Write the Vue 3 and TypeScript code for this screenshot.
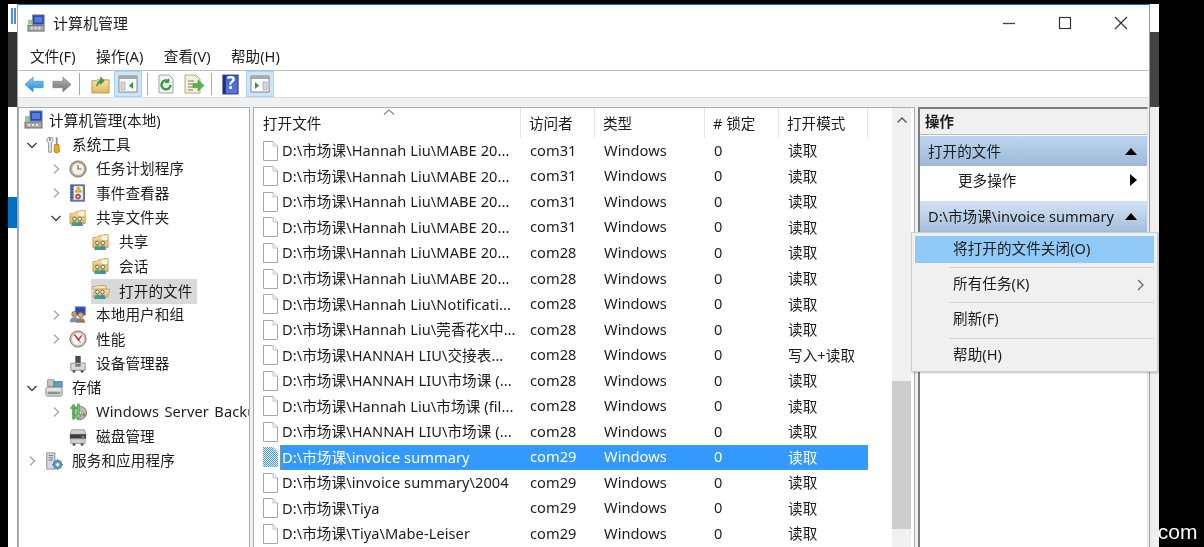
<script setup lang="ts">
interface TreeNode { label: string; level: number; arrow: '' | 'open' | 'closed'; icon: string; selected?: boolean }
interface FileRow { name: string; user: string; mode: string; selected?: boolean }

const menus: string[] = ['文件(F)', '操作(A)', '查看(V)', '帮助(H)']

const tree: TreeNode[] = [
  { label: '计算机管理(本地)', level: 0, arrow: '', icon: 'i-computer' },
  { label: '系统工具', level: 1, arrow: 'open', icon: 'i-tools' },
  { label: '任务计划程序', level: 2, arrow: 'closed', icon: 'i-clock' },
  { label: '事件查看器', level: 2, arrow: 'closed', icon: 'i-log' },
  { label: '共享文件夹', level: 2, arrow: 'open', icon: 'i-share' },
  { label: '共享', level: 3, arrow: '', icon: 'i-share' },
  { label: '会话', level: 3, arrow: '', icon: 'i-share' },
  { label: '打开的文件', level: 3, arrow: '', icon: 'i-share-open', selected: true },
  { label: '本地用户和组', level: 2, arrow: 'closed', icon: 'i-users' },
  { label: '性能', level: 2, arrow: 'closed', icon: 'i-gauge' },
  { label: '设备管理器', level: 2, arrow: '', icon: 'i-device' },
  { label: '存储', level: 1, arrow: 'open', icon: 'i-storage' },
  { label: 'Windows Server Backup', level: 2, arrow: 'closed', icon: 'i-backup' },
  { label: '磁盘管理', level: 2, arrow: '', icon: 'i-disk' },
  { label: '服务和应用程序', level: 1, arrow: 'closed', icon: 'i-services' },
]

const files: FileRow[] = [
  { name: 'D:\\市场课\\Hannah Liu\\MABE 20...', user: 'com31', mode: '读取' },
  { name: 'D:\\市场课\\Hannah Liu\\MABE 20...', user: 'com31', mode: '读取' },
  { name: 'D:\\市场课\\Hannah Liu\\MABE 20...', user: 'com31', mode: '读取' },
  { name: 'D:\\市场课\\Hannah Liu\\MABE 20...', user: 'com31', mode: '读取' },
  { name: 'D:\\市场课\\Hannah Liu\\MABE 20...', user: 'com28', mode: '读取' },
  { name: 'D:\\市场课\\Hannah Liu\\MABE 20...', user: 'com28', mode: '读取' },
  { name: 'D:\\市场课\\Hannah Liu\\Notificati...', user: 'com28', mode: '读取' },
  { name: 'D:\\市场课\\Hannah Liu\\莞香花X中...', user: 'com28', mode: '读取' },
  { name: 'D:\\市场课\\HANNAH LIU\\交接表...', user: 'com28', mode: '写入+读取' },
  { name: 'D:\\市场课\\HANNAH LIU\\市场课 (...', user: 'com28', mode: '读取' },
  { name: 'D:\\市场课\\Hannah Liu\\市场课 (fil...', user: 'com28', mode: '读取' },
  { name: 'D:\\市场课\\HANNAH LIU\\市场课 (...', user: 'com28', mode: '读取' },
  { name: 'D:\\市场课\\invoice summary', user: 'com29', mode: '读取', selected: true },
  { name: 'D:\\市场课\\invoice summary\\2004', user: 'com29', mode: '读取' },
  { name: 'D:\\市场课\\Tiya', user: 'com29', mode: '读取' },
  { name: 'D:\\市场课\\Tiya\\Mabe-Leiser', user: 'com29', mode: '读取' },
]

const menuItems: { label: string; hot?: boolean; sub?: boolean }[] = [
  { label: '将打开的文件关闭(O)', hot: true },
  { label: '所有任务(K)', sub: true },
  { label: '刷新(F)' },
  { label: '帮助(H)' },
]
</script>

<template>
  <div class="desktop">
    <svg class="defs" width="0" height="0" aria-hidden="true">
      <defs>
        <linearGradient id="g-folder" x1="0" y1="0" x2="0" y2="1"><stop offset="0" stop-color="#f7e3a6" /><stop offset="1" stop-color="#dfb862" /></linearGradient>
        <linearGradient id="g-blue" x1="0" y1="0" x2="0" y2="1"><stop offset="0" stop-color="#8fd0f8" /><stop offset="1" stop-color="#1f86d8" /></linearGradient>
        <linearGradient id="g-gray" x1="0" y1="0" x2="0" y2="1"><stop offset="0" stop-color="#b8b8b8" /><stop offset="1" stop-color="#6f6f6f" /></linearGradient>
        <linearGradient id="g-help" x1="0" y1="0" x2="0" y2="1"><stop offset="0" stop-color="#3f63cc" /><stop offset="1" stop-color="#5b7ad8" /></linearGradient>
        <symbol id="i-computer" viewBox="0 0 20 20">
          <rect x="6" y="1" width="12" height="10" fill="#2a47b8" stroke="#6d7c96" />
          <rect x="8" y="3" width="8" height="6" fill="#4f7ee0" />
          <path d="M1 6h5v5H1z" fill="#7fbf6a" opacity=".8" />
          <rect x="1" y="12" width="17" height="6" fill="#a9a9a9" stroke="#6e6e6e" />
          <path d="M4 14h2v2H4zm4 0h2v2H8zm4 0h2v2h-2z" fill="#e8e8e8" />
        </symbol>
        <symbol id="i-tools" viewBox="0 0 20 20">
          <path d="M5 1.500a3 3 0 0 0-2.500 4.500L4 8v10h3V8l1.500-2A3 3 0 0 0 6 1.500V5H5z" fill="#eeeeee" stroke="#777" stroke-width=".9" />
          <rect x="12" y="1.500" width="2" height="8" fill="#8f8f8f" />
          <path d="M10.500 9.500h5l.5 8-3 1.500-3-1.500z" fill="#e8a820" stroke="#8c6410" stroke-width=".7" />
        </symbol>
        <symbol id="i-clock" viewBox="0 0 20 20">
          <circle cx="10" cy="10" r="9" fill="#b3aea3" stroke="#77736a" />
          <circle cx="10" cy="10" r="6.500" fill="#f6f2e2" />
          <path d="M10 5.500V10h4" fill="none" stroke="#7a6a40" stroke-width="1.300" />
        </symbol>
        <symbol id="i-log" viewBox="0 0 20 20">
          <rect x="2" y="1" width="15" height="18" fill="#6c86b4" stroke="#3f5781" />
          <rect x="5" y="2.500" width="10.500" height="15" fill="#eeeef2" />
          <path d="M2 3h3M2 6h3M2 9h3M2 12h3M2 15h3" stroke="#26344f" stroke-width="1" />
          <path d="M10.500 3l3.500 6H7z" fill="#f0c020" stroke="#a07c10" stroke-width=".6" />
          <circle cx="10" cy="14" r="2.800" fill="#e0505a" stroke="#952a30" stroke-width=".7" />
          <circle cx="10" cy="14" r="1" fill="#fff" />
        </symbol>
        <symbol id="i-share" viewBox="0 0 20 20">
          <path d="M1 5h4l1-1h2V3l8-1.500 2 .5v14H1z" fill="url(#g-folder)" stroke="#b89550" stroke-width=".8" />
          <rect x="11" y="3" width="6" height="5" fill="#fbf4dc" />
          <path d="M1 9h17" stroke="#caa45a" stroke-width=".7" />
          <circle cx="6" cy="11" r="2" fill="#fff3d8" stroke="#5b5138" stroke-width=".9" />
          <circle cx="12" cy="11" r="2" fill="#fff3d8" stroke="#5b5138" stroke-width=".9" />
          <path d="M2.500 19c0-3.500 1.500-5 3.500-5s3.500 1.500 3.500 5z" fill="#46a46e" />
          <path d="M8.500 19c0-3.500 1.500-5 3.500-5s3.500 1.500 3.500 5z" fill="#3e8fb0" />
        </symbol>
        <symbol id="i-share-open" viewBox="0 0 20 20">
          <path d="M1 5h4l1-1h9l1 4H1z" fill="#f7e6b0" stroke="#b89550" stroke-width=".8" />
          <path d="M4 8h16l-3 9H1z" fill="url(#g-folder)" stroke="#b89550" stroke-width=".8" />
          <circle cx="6" cy="11" r="2" fill="#fff3d8" stroke="#5b5138" stroke-width=".9" />
          <circle cx="11.500" cy="11" r="2" fill="#fff3d8" stroke="#5b5138" stroke-width=".9" />
          <path d="M2.500 19c0-3.500 1.500-5 3.500-5s3.500 1.500 3.500 5z" fill="#46a46e" />
          <path d="M8 19c0-3.500 1.500-5 3.500-5s3.500 1.500 3.500 5z" fill="#3e8fb0" />
        </symbol>
        <symbol id="i-users" viewBox="0 0 20 20">
          <rect x="7" y="1" width="11" height="9" fill="#2b49b8" stroke="#6d7c96" />
          <circle cx="6" cy="9" r="3" fill="#c49a6c" stroke="#6d5030" stroke-width=".7" />
          <circle cx="13" cy="10" r="3" fill="#d3ad80" stroke="#6d5030" stroke-width=".7" />
          <path d="M1 18c0-4 2-5.500 5-5.500s5 1.500 5 5.500z" fill="#7c8fb0" />
          <path d="M8 18.500c0-3.500 2-5 5-5s5 1.500 5 5z" fill="#9a7c55" />
        </symbol>
        <symbol id="i-gauge" viewBox="0 0 20 20">
          <circle cx="10" cy="10" r="9" fill="#c9c5bb" stroke="#77736a" />
          <circle cx="10" cy="10" r="6.500" fill="#fbfafa" />
          <path d="M6 5l4.500 6L14 6" fill="none" stroke="#cf2a2a" stroke-width="1.600" />
          <path d="M10.500 11l2.500 3" stroke="#444" stroke-width="1" />
        </symbol>
        <symbol id="i-device" viewBox="0 0 20 20">
          <rect x="7" y="1" width="6" height="8" fill="#4a4a4a" />
          <path d="M2 9h16v8H2z" fill="#d9d9d9" stroke="#8a8a8a" />
          <rect x="4" y="17" width="3" height="2.500" fill="#4a4a4a" />
          <rect x="13" y="17" width="3" height="2.500" fill="#4a4a4a" />
          <rect x="7" y="10" width="6" height="3" fill="#7a7a7a" />
        </symbol>
        <symbol id="i-storage" viewBox="0 0 20 20">
          <rect x="3" y="1" width="7" height="7" fill="#c9c9c9" stroke="#8c8c8c" />
          <rect x="10" y="3" width="9" height="6" fill="#5aa3cc" stroke="#3e7c9f" />
          <path d="M1 11c0-1 1-2 2-2h14c1 0 2 1 2 2v6c0 1-1 2-2 2H3c-1 0-2-1-2-2z" fill="#e4e4e4" stroke="#7d7d7d" />
          <rect x="3" y="14" width="14" height="3" fill="#8f8f8f" />
          <rect x="14" y="15" width="2" height="1.500" fill="#6cd06c" />
        </symbol>
        <symbol id="i-backup" viewBox="0 0 20 20">
          <circle cx="12" cy="11" r="7.500" fill="#b9b9b9" stroke="#7d7d7d" />
          <circle cx="12" cy="11" r="2" fill="#efefef" stroke="#777" stroke-width=".7" />
          <path d="M4 18V6H1.500L5 1l3.500 5H6v12z" fill="#4fc24f" stroke="#2c8a2c" stroke-width=".6" />
          <path d="M9.500 1v12H7l3.500 5 3.500-5h-2.500V1z" fill="#6fd96f" stroke="#2c8a2c" stroke-width=".6" />
          <circle cx="17" cy="13" r="1.800" fill="#c9703a" />
        </symbol>
        <symbol id="i-disk" viewBox="0 0 20 20">
          <path d="M3 2h14l2 5H1z" fill="#d2d2d2" stroke="#8a8a8a" stroke-width=".8" />
          <rect x="1" y="7" width="18" height="5" fill="#3c3c3c" />
          <rect x="14" y="9" width="3" height="1.500" fill="#6cd06c" />
          <rect x="2" y="12" width="16" height="5" fill="#cfcfcf" stroke="#8a8a8a" stroke-width=".8" />
          <rect x="4" y="17" width="3" height="2.500" fill="#4a4a4a" />
          <rect x="13" y="17" width="3" height="2.500" fill="#4a4a4a" />
        </symbol>
        <symbol id="i-services" viewBox="0 0 20 20">
          <rect x="2" y="1" width="9" height="18" fill="#d5dbe3" stroke="#7f8a99" />
          <path d="M4 4h5M4 6.500h5M4 9h5" stroke="#6a7482" stroke-width="1" />
          <circle cx="14" cy="14" r="4.500" fill="#6a9cc8" stroke="#3e6f9c" />
          <circle cx="14" cy="14" r="1.800" fill="#eef4fa" />
          <path d="M14 8v2M14 18v2M8 14h2M18 14h2M10 10l1.500 1.500M18 18l-1.500-1.500M18 10l-1.500 1.500M10 18l1.500-1.500" stroke="#4a7cac" stroke-width="1.200" />
        </symbol>
        <symbol id="i-page" viewBox="0 0 15 20">
          <path d="M.5.500H10L14.500 5V19.500H.5z" fill="#fff" stroke="#a6a6a6" />
          <path d="M10 .500V5h4.500" fill="#f0f0f0" stroke="#c4c4c4" />
        </symbol>
        <pattern id="p-dots" width="2" height="2" patternUnits="userSpaceOnUse">
          <rect width="2" height="2" fill="#eaf3fb" /><rect width="1" height="1" fill="#3f97e8" /><rect x="1" y="1" width="1" height="1" fill="#3f97e8" />
        </pattern>
        <symbol id="i-page-sel" viewBox="0 0 15 20">
          <path d="M0 0H10L15 5V20H0z" fill="url(#p-dots)" />
        </symbol>
      </defs>
    </svg>

    <div class="strip strip-left">
      <div class="strip-cap"><i class="cap-mark"></i></div>
      <div class="strip-dark left-dark"></div>
      <div class="strip-white"></div>
      <div class="strip-blue"></div>
      <div class="strip-white grow"></div>
    </div>

    <section class="window">
      <header class="title">
        <svg class="title-icon"><use href="#i-computer" /></svg>
        <span class="title-text">计算机管理</span>
        <div class="caps">
          <svg class="cap" viewBox="0 0 14 14"><path d="M1 7.500h12" stroke="#444" stroke-width="1.300" /></svg>
          <svg class="cap" viewBox="0 0 14 14"><rect x="1.500" y="1.500" width="11" height="11" fill="none" stroke="#333" stroke-width="1.200" /></svg>
          <svg class="cap" viewBox="0 0 14 14"><path d="M1 1l12 12M13 1L1 13" stroke="#333" stroke-width="1.200" /></svg>
        </div>
      </header>

      <nav class="menubar">
        <span v-for="m in menus" :key="m" class="menu-item">{{ m }}</span>
      </nav>

      <div class="toolbar">
        <span class="tb">
          <svg viewBox="0 0 22 18" width="20" height="17"><path d="M1 9l9-8v4.500h11v7H10V17z" fill="url(#g-blue)" stroke="#3e94d8" stroke-width=".8" /></svg>
        </span>
        <span class="tb">
          <svg viewBox="0 0 22 18" width="20" height="17"><path d="M21 9l-9-8v4.500H1v7h11V17z" fill="url(#g-gray)" stroke="#808080" stroke-width=".8" /></svg>
        </span>
        <i class="tb-sep first"></i>
        <span class="tb">
          <svg viewBox="0 0 20 20" width="19" height="19"><path d="M1 6h5l1-1h12v14H1z" fill="url(#g-folder)" stroke="#a88a40" stroke-width=".8" /><path d="M6 12c0-4 2-6 4-7V2l4 4-4 4V8c-1 .5-3 2-4 4z" fill="#3f9c3f" stroke="#2a7a2a" stroke-width=".5" /></svg>
        </span>
        <span class="tb on">
          <svg viewBox="0 0 20 20" width="20" height="20"><rect x="1" y="2" width="18" height="16" fill="#fafafa" stroke="#8a8a8a" /><rect x="1" y="2" width="18" height="3" fill="#a8a8a8" /><path d="M3 8h4v8H3z" fill="#d9d9d9" stroke="#999" stroke-width=".6" /><path d="M15 8v7l-4-3.500z" fill="#2f9b3f" /></svg>
        </span>
        <i class="tb-sep wide"></i>
        <span class="tb">
          <svg viewBox="0 0 20 20" width="20" height="20"><path d="M3 1h10l4 4v14H3z" fill="#f3f3f3" stroke="#a6a6a6" /><path d="M14.500 11a4.500 4.500 0 1 1-1.500-3.500" fill="none" stroke="#2f9b3f" stroke-width="2.400" /><path d="M13 4v5h-4.500z" fill="#2f9b3f" /></svg>
        </span>
        <span class="tb">
          <svg viewBox="0 0 20 20" width="20" height="20"><path d="M1 1h11l4 4v14H1z" fill="#f6efd2" stroke="#b2a98a" /><path d="M4 7h6M4 10h5M4 13h5M4 16h5" stroke="#7a7a7a" stroke-width="1" /><path d="M9 9.500h5V6l6 5.500-6 5.500v-3.500H9z" fill="#58b548" stroke="#3a8a30" stroke-width=".5" /></svg>
        </span>
        <i class="tb-sep third"></i>
        <span class="tb">
          <svg viewBox="0 0 18 22" width="17" height="21"><rect x="1" y="1" width="16" height="20" fill="url(#g-help)" stroke="#1f2f78" /><rect x="1" y="1" width="3" height="20" fill="#1e2f80" /></svg>
          <span class="help-q">?</span>
        </span>
        <span class="tb on second">
          <svg viewBox="0 0 20 20" width="20" height="20"><rect x="1" y="2" width="18" height="16" fill="#fafafa" stroke="#8a8a8a" /><rect x="1" y="2" width="18" height="3" fill="#a8a8a8" /><path d="M13 8h4v8h-4z" fill="#d9d9d9" stroke="#999" stroke-width=".6" /><path d="M5 8v7l4-3.500z" fill="#2f9b3f" /></svg>
        </span>
      </div>

      <div class="panes">
        <aside class="pane tree">
          <div v-for="n in tree" :key="n.label" class="tree-row" :class="'lv' + n.level">
            <svg v-if="n.level === 1 || n.level === 2" class="arrow" viewBox="0 0 12 12">
              <path v-if="n.arrow === 'open'" d="M1.500 4l4.500 4.500L10.500 4" fill="none" stroke="#444" stroke-width="1.500" />
              <path v-else-if="n.arrow === 'closed'" d="M4 1.500L8.500 6 4 10.500" fill="none" stroke="#aaa" stroke-width="1.500" />
            </svg>
            <span class="node" :class="{ picked: n.selected }">
              <svg class="node-icon"><use :href="'#' + n.icon" /></svg>
              <span class="node-label">{{ n.label }}</span>
            </span>
          </div>
        </aside>

        <main class="pane list">
          <div class="list-main">
            <div class="head">
              <span class="h h-name">打开文件<svg class="sort" viewBox="0 0 12 6"><path d="M1 5.500L6 1l5 4.500" fill="none" stroke="#888" stroke-width="1.300" /></svg></span>
              <span class="h h-user">访问者</span>
              <span class="h h-type">类型</span>
              <span class="h h-lock"># 锁定</span>
              <span class="h h-mode">打开模式</span>
            </div>
            <div v-for="(f, i) in files" :key="i" class="file-row">
              <svg class="page"><use :href="f.selected ? '#i-page-sel' : '#i-page'" /></svg>
              <div class="cells" :class="{ sel: f.selected }">
                <span class="c-name">{{ f.name }}</span>
                <span class="c">{{ f.user }}</span>
                <span class="c">Windows</span>
                <span class="c">0</span>
                <span class="c">{{ f.mode }}</span>
              </div>
            </div>
          </div>
          <div class="scroll">
            <div class="scroll-track">
              <svg class="scroll-up" viewBox="0 0 12 8"><path d="M1.500 6.500L6 2l4.500 4.500" fill="none" stroke="#606060" stroke-width="1.500" /></svg>
              <div class="thumb"></div>
            </div>
          </div>
        </main>

        <aside class="pane actions">
          <div class="act-head">操作</div>
          <div class="act-sec">
            <span class="lift">打开的文件</span>
            <svg class="tri" viewBox="0 0 12 7"><path d="M6 0l6 7H0z" fill="#000" /></svg>
          </div>
          <div class="act-item">
            <span class="lift">更多操作</span>
            <svg class="tri-r" viewBox="0 0 7 12"><path d="M0 0l7 6-7 6z" fill="#000" /></svg>
          </div>
          <div class="act-sec pale">
            <span class="lift">D:\市场课\invoice summary</span>
            <svg class="tri" viewBox="0 0 12 7"><path d="M6 0l6 7H0z" fill="#000" /></svg>
          </div>
        </aside>
      </div>
    </section>

    <div class="strip strip-right">
      <div class="strip-cap"></div>
      <div class="strip-dark right-dark"></div>
      <div class="strip-pale grow"></div>
    </div>

    <div class="ctx">
      <div v-for="(m, i) in menuItems" :key="m.label" class="ctx-row" :class="{ hot: m.hot, ruled: i > 0 }">
        <span class="ctx-label">{{ m.label }}</span>
        <svg v-if="m.sub" class="ctx-sub" viewBox="0 0 7 12"><path d="M1 1l5 5-5 5" fill="none" stroke="#666" stroke-width="1.300" /></svg>
      </div>
    </div>

    <span class="wm">.com</span>
  </div>
</template>

<style>
html, body { margin: 0; background: #000; overflow: hidden; }
</style>

<style scoped>
.defs { position: absolute; }
.desktop {
  position: relative;
  display: flex;
  align-items: flex-start;
  width: 1204px;
  height: 547px;
  overflow: hidden;
  box-sizing: border-box;
  padding: 4px 0 0 8px;
  background: #000;
  color: #1c1c1c;
  font-family: "Noto Sans", "Noto Sans CJK SC", sans-serif;
  font-size: 14.6px;
  filter: blur(0.35px);
}
.strip { width: 9px; height: 560px; display: flex; flex-direction: column; flex: none; }
.strip-cap { height: 28px; background: #fff; overflow: hidden; flex: none; display: flex; justify-content: flex-end; align-items: flex-start; }
.cap-mark { width: 6px; height: 16px; margin-top: 4px; background: repeating-linear-gradient(90deg, #2a6fc0 0 2px, transparent 2px 3px); opacity: 0.8; }
.strip-dark { background: #3c3c3c; flex: none; }
.left-dark { height: 75px; background: #333; }
.right-dark { height: 75px; background: #444; }
.strip-white { height: 90px; background: #fff; flex: none; }
.strip-blue { height: 31px; background: #0070c4; flex: none; }
.strip-pale { background: #eeeeee; }
.grow { flex: 1; height: auto; }

.window {
  width: 1133px;
  height: 560px;
  flex: none;
  box-sizing: border-box;
  display: flex;
  flex-direction: column;
  background: #f0f0f0;
  border: 1px solid #64aee8;
  border-top: 1px solid #0a78d6;
}
.title {
  height: 37px;
  flex: none;
  display: flex;
  align-items: center;
  background: #fff;
  padding-left: 9px;
}
.title-icon { width: 19px; height: 19px; margin-top: -1px; }
.title-text { margin-left: 7px; margin-top: -3px; font-size: 15px; }
.caps { margin-left: auto; display: flex; align-items: center; gap: 42px; padding-right: 21px; margin-top: -1px; }
.cap { width: 14px; height: 14px; }

.menubar {
  height: 28px;
  flex: none;
  display: flex;
  align-items: center;
  gap: 20.5px;
  padding-left: 12px;
  background: #fff;
  border-bottom: 1px solid #bfbfbf;
  font-size: 14.6px;
}
.menu-item { margin-top: -2px; }

.toolbar {
  height: 26px;
  flex: none;
  display: flex;
  align-items: center;
  padding-left: 2px;
  background: #fff;
  border-bottom: 1px solid #dcdcdc;
}
.tb {
  position: relative;
  width: 28px;
  height: 26px;
  box-sizing: border-box;
  display: flex;
  align-items: center;
  justify-content: center;
  flex: none;
}
.tb.on { background: #cce4f7; border: 1px solid #a8d4f5; }
.tb.second { margin-left: 2px; }
.help-q { position: absolute; left: 11px; top: 0; font-size: 17px; font-weight: 700; color: #fff; }
.tb-sep { width: 1px; height: 22px; background: #a8a8a8; flex: none; }
.tb-sep.first { margin: 0 6px 0 3px; }
.tb-sep.wide { margin: 0 4px 0 5px; }
.tb-sep.third { margin: 0 4px 0 3px; }

.panes {
  flex: 1;
  min-height: 0;
  margin-top: 9px;
  display: flex;
  align-items: stretch;
}
.pane { background: #fff; box-sizing: border-box; overflow: hidden; flex: none; }

.tree { width: 232px; border: 1px solid #a4afba; border-bottom: 0; }
.tree-row { height: 24.35px; display: flex; align-items: center; white-space: nowrap; word-spacing: 1.5px; }
.lv0 { padding-left: 4px; }
.lv1 { padding-left: 7px; }
.lv2 { padding-left: 31px; }
.lv3 { padding-left: 72px; }
.arrow { width: 12px; height: 12px; flex: none; margin-right: 6px; }
.node { display: flex; align-items: center; height: 25px; padding: 0 5px 0 1px; }
.node-label { padding-bottom: 2px; letter-spacing: 0.1px; }
.node.picked { background: #d9d9d9; margin-top: 1px; }
.node-icon { width: 18px; height: 18px; flex: none; margin-right: 9px; }
.lv0 .node-icon { width: 20px; height: 20px; margin-right: 5px; }

.list { width: 662px; margin-left: 3px; display: flex; border: 1px solid #a4afba; border-bottom: 0; }
.list-main { width: 638px; flex: none; overflow: hidden; }
.head { display: flex; height: 30px; align-items: center; }
.h { height: 100%; display: flex; align-items: center; padding: 0 0 2px 8px; box-sizing: border-box; border-right: 1px solid #e5e5e5; flex: none; position: relative; }
.h-name { width: 267px; padding-left: 9px; }
.h-user { width: 74px; }
.h-type { width: 110px; }
.h-lock { width: 74px; }
.h-mode { width: 89px; }
.sort { position: absolute; left: 129px; top: 1px; width: 12px; height: 6px; }
.file-row { display: flex; height: 25.55px; align-items: center; }
.page { width: 15px; height: 20px; flex: none; margin: 0 2px 0 9px; }
.cells { display: grid; grid-template-columns: 241px 74px 110px 74px 89px; height: 100%; align-items: center; box-sizing: border-box; width: 588px; flex: none; letter-spacing: 0.07px; }
.cells.sel { background: #3399ff; color: #fff; outline: 1px dotted #c8873e; outline-offset: -1px; }
.c-name { padding: 0 0 2px 2px; white-space: nowrap; overflow: hidden; }
.c { padding: 0 0 2px 9px; white-space: nowrap; }
.scroll { flex: 1; padding-right: 3px; min-width: 0; }
.scroll-track { height: 100%; background: #f0f0f0; display: flex; flex-direction: column; align-items: center; }
.scroll-up { width: 12px; height: 8px; margin-top: 8px; flex: none; }
.thumb { width: 100%; height: 148px; margin-top: 257px; background: #cdcdcd; flex: none; }

.actions { width: 230px; margin-left: 3px; border-left: 2px solid #7d7d7d; border-top: 2px solid #7d7d7d; border-right: 1px solid #e6e6e6; }
.act-head { height: 26px; background: #f0f0f0; font-weight: 700; font-size: 14.4px; padding: 0 0 2px 5px; display: flex; align-items: center; border-bottom: 1px solid #b9b9b9; margin-bottom: 1px; box-sizing: border-box; }
.lift { padding-bottom: 2px; }
.act-sec {
  height: 30px;
  display: flex;
  align-items: center;
  justify-content: space-between;
  padding: 0 10px 0 8px;
  background: linear-gradient(#bcd5ee, #9db9d9);
}
.act-sec.pale { height: 31px; background: linear-gradient(#d2e3f4, #a4bedb); }
.tri { width: 12px; height: 7px; }
.act-item { height: 35px; box-sizing: border-box; display: flex; align-items: center; justify-content: space-between; padding: 0 10px 7px 38px; background: #fff; }
.tri-r { width: 7px; height: 12px; }

.ctx {
  position: absolute;
  left: 911px;
  top: 232px;
  width: 247px;
  height: 140px;
  box-sizing: border-box;
  padding: 3px 3px 0;
  background: #f0f0f0;
  border: 1px solid #cfcfcf;
  box-shadow: 1px 1px 2px rgba(0, 0, 0, 0.25);
}
.ctx-row { height: 35.3px; display: flex; align-items: center; justify-content: space-between; padding: 0 10px 0 38px; position: relative; box-sizing: border-box; }
.ctx-label { padding-bottom: 4px; letter-spacing: 0.05px; }
.ctx-row.hot { height: 27px; background: #91c9f7; margin-bottom: 4px; }
.ctx-row.ruled::before { content: ""; position: absolute; left: 34px; right: 0; top: 0; height: 1px; background: #d4d4d4; }
.ctx-sub { width: 7px; height: 12px; }

.wm { position: absolute; left: 1152px; top: 520px; color: #fff; font-family: "Liberation Sans", sans-serif; font-size: 21px; }
</style>
